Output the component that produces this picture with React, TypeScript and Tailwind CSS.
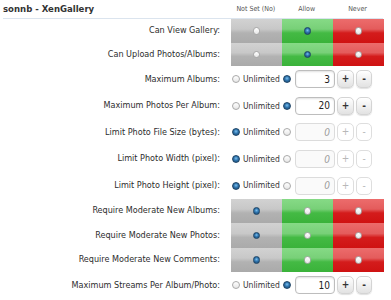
import * as React from "react";

type Choice = "unset" | "allow" | "never";

const cellBg: Record<Choice, string> = {
  unset:
    "bg-[linear-gradient(to_bottom,#d2d2d2_0%,#c8c8c8_42%,#b2b2b2_58%,#aaaaaa_100%)]",
  allow:
    "bg-[linear-gradient(to_bottom,#86da86_0%,#78d078_42%,#44ba44_58%,#3ab23a_100%)]",
  never:
    "bg-[linear-gradient(to_bottom,#ec6c6c_0%,#e45c5c_42%,#d41c1c_58%,#cf1212_100%)]",
};

function Radio({ checked, size = "sm" }: { checked: boolean; size?: "sm" | "md" }) {
  return (
    <span
      className={
        (size === "sm" ? "h-[7.5px] w-[7.5px] " : "h-[8px] w-[8px] ") +
        "inline-block shrink-0 rounded-full border " +
        (checked
          ? "border-[#1d4466] bg-[radial-gradient(circle_at_50%_40%,#7cc0ee_0%,#2f74ad_45%,#1c4a72_100%)]"
          : "border-[#a9a9a9] bg-[linear-gradient(to_bottom,#ffffff_0%,#e6e6e6_100%)]")
      }
    />
  );
}

function Label({ children }: { children: React.ReactNode }) {
  return (
    <div className="w-[217px] shrink-0 whitespace-nowrap text-right text-[9px] text-[#2d2d2d]">
      {children}
    </div>
  );
}

function ChoiceRow({ label, value, h }: { label: string; value: Choice; h: string }) {
  return (
    <div className={"flex items-center " + h}>
      <Label>{label}</Label>
      <div className="ml-[11px] flex h-full">
        {(["unset", "allow", "never"] as Choice[]).map((c) => (
          <div key={c} className={"flex w-[51px] items-center justify-center " + cellBg[c]}>
            <Radio checked={c === value} />
          </div>
        ))}
      </div>
    </div>
  );
}

function NumberRow({ label, value }: { label: string; value: number | null }) {
  const on = value !== null;
  const btn =
    "ml-[2px] flex h-[18px] items-center justify-center rounded-[5px] border text-[10px] leading-none " +
    (on
      ? "border-[#d4d4d4] bg-[linear-gradient(to_bottom,#ffffff,#e2e2e2)] font-bold text-[#333] shadow-[0_1px_1px_rgba(0,0,0,0.12)]"
      : "border-[#dedede] bg-white text-[#b8b8b8]");
  return (
    <div className="flex h-[26.6px] items-center">
      <Label>{label}</Label>
      <div className="ml-[12px] flex items-center">
        <Radio checked={!on} size="md" />
        <span className="ml-[3px] w-[40px] text-[8.5px] text-[#333]">Unlimited</span>
        <Radio checked={on} size="md" />
        <div
          className={
            "ml-[4px] flex h-[18px] w-[40px] items-center justify-end rounded-[4px] border pr-[4px] text-[10px] " +
            (on
              ? "border-[#bdbdbd] bg-white text-[#222] shadow-[inset_0_1px_2px_rgba(0,0,0,0.12)]"
              : "border-[#dcdcdc] bg-[#fafafa] italic text-[#9a9a9a]")
          }
        >
          {on ? value : 0}
        </div>
        <button className={btn + " w-[17px]"}>+</button>
        <button className={btn + " w-[16px]"}>-</button>
      </div>
    </div>
  );
}

export default function App() {
  return (
    <div className="h-[300px] w-[391px] overflow-hidden bg-white pl-[3px] font-['DejaVu_Sans_Condensed','DejaVu_Sans',sans-serif]">
      <div className="flex h-[19px] w-[380px] items-center border-b border-[#dbe4ee]">
        <div className="w-[228px] whitespace-nowrap text-[9.5px] font-bold text-[#333]">
          sonnb - XenGallery
        </div>
        {["Not Set (No)", "Allow", "Never"].map((t) => (
          <div key={t} className="w-[51px] text-center text-[7px] text-[#555]">
            {t}
          </div>
        ))}
      </div>
      <ChoiceRow label="Can View Gallery:" value="allow" h="h-[23.5px]" />
      <ChoiceRow label="Can Upload Photos/Albums:" value="allow" h="h-[23.5px]" />
      <NumberRow label="Maximum Albums:" value={3} />
      <NumberRow label="Maximum Photos Per Album:" value={20} />
      <NumberRow label="Limit Photo File Size (bytes):" value={null} />
      <NumberRow label="Limit Photo Width (pixel):" value={null} />
      <NumberRow label="Limit Photo Height (pixel):" value={null} />
      <ChoiceRow label="Require Moderate New Albums:" value="unset" h="h-[24.33px]" />
      <ChoiceRow label="Require Moderate New Photos:" value="unset" h="h-[24.33px]" />
      <ChoiceRow label="Require Moderate New Comments:" value="unset" h="h-[24.33px]" />
      <NumberRow label="Maximum Streams Per Album/Photo:" value={10} />
    </div>
  );
}
